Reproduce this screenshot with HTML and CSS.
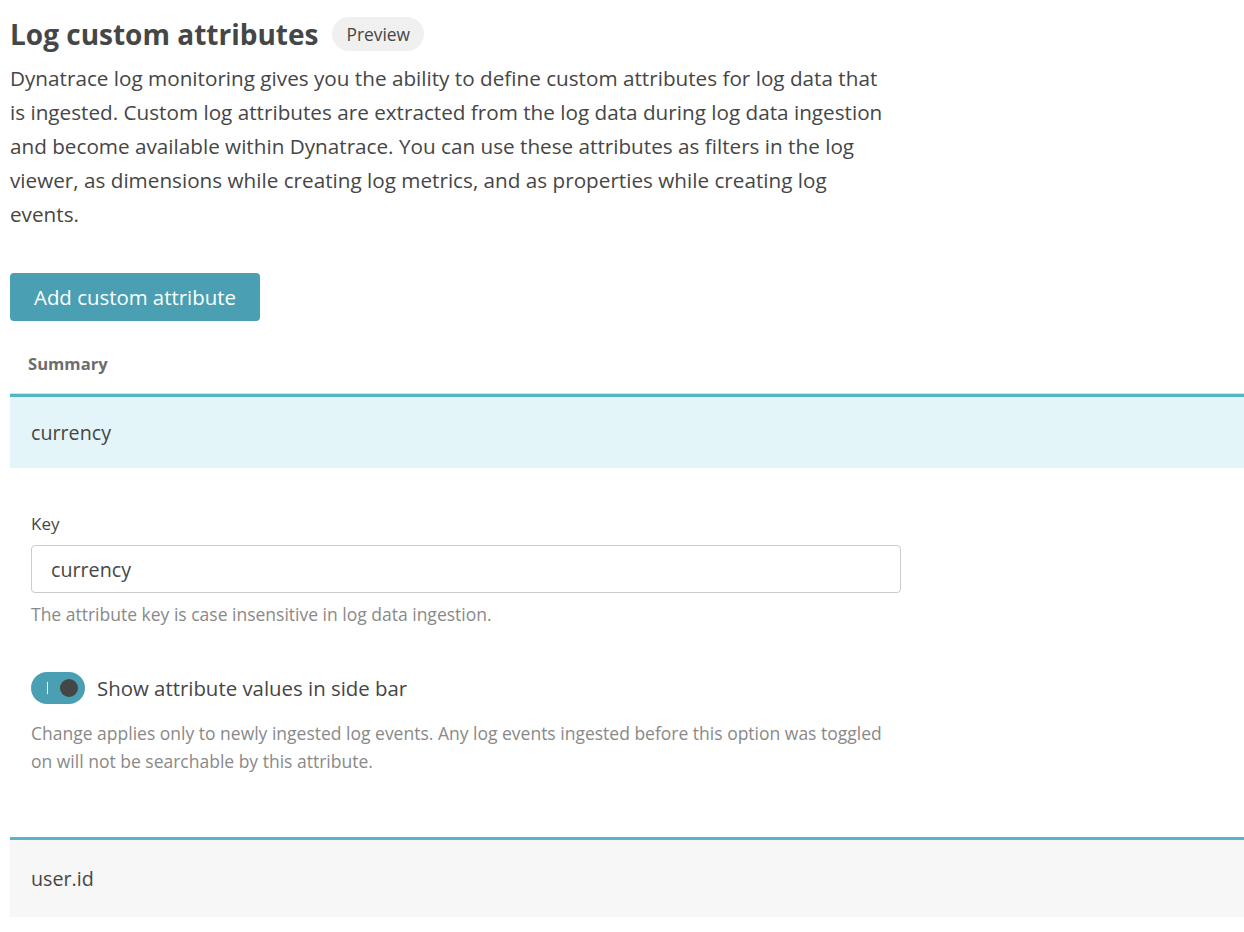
FILE: index.html
```html
<!DOCTYPE html>
<html lang="en">
<head>
<meta charset="utf-8">
<title>Log custom attributes</title>
<link rel="stylesheet" href="styles.css">
</head>
<body>
<div class="page">
  <header class="head">
    <h1 class="title">Log custom attributes</h1>
    <span class="badge">Preview</span>
  </header>
  <p class="desc">Dynatrace log monitoring gives you the ability to define custom attributes for log data that<br>is ingested. Custom log attributes are extracted from the log data during log data ingestion<br>and become available within Dynatrace. You can use these attributes as filters in the log<br>viewer, as dimensions while creating log metrics, and as properties while creating log<br>events.</p>
  <button class="btn" type="button">Add custom attribute</button>
  <div class="table">
    <div class="thead">Summary</div>
    <div class="row row-open">currency</div>
    <div class="details">
      <label class="label" for="key">Key</label>
      <input class="input" id="key" type="text" value="currency">
      <p class="hint">The attribute key is case insensitive in log data ingestion.</p>
      <div class="toggle-line">
        <span class="toggle"><span class="toggle-bar"></span><span class="toggle-knob"></span></span>
        <span class="toggle-label">Show attribute values in side bar</span>
      </div>
      <p class="hint hint-wide">Change applies only to newly ingested log events. Any log events ingested before this option was toggled on will not be searchable by this attribute.</p>
    </div>
    <div class="row row-closed">user.id</div>
  </div>
</div>
</body>
</html>
```
FILE: styles.css
```css
html, body {
  margin: 0;
  padding: 0;
  background: #ffffff;
}
body {
  font-family: "Open Sans", "Noto Sans", sans-serif;
  color: #454646;
}
.page {
  padding: 14px 0 0 10px;
}
.head {
  display: flex;
  align-items: center;
  gap: 14px;
}
.title {
  margin: 0;
  font-size: 28px;
  font-weight: 700;
  line-height: 40px;
  color: #454646;
}
.badge {
  display: inline-block;
  background: #f0f0f0;
  border-radius: 17px;
  padding: 0 14px;
  height: 34px;
  line-height: 34px;
  font-size: 17.4px;
  color: #454646;
}
.desc {
  margin: 7px 0 0 0;
  max-width: 910px;
  font-size: 20.7px;
  line-height: 34px;
  color: #454646;
}
.btn {
  display: block;
  margin-top: 42px;
  height: 48px;
  width: 250px;
  border: none;
  border-radius: 4px;
  background: #4aa0b2;
  color: #ffffff;
  font-family: inherit;
  font-size: 20.4px;
  padding: 0 24px;
  text-align: left;
}
.thead {
  margin-top: 13px;
  height: 60px;
  box-sizing: border-box;
  padding: 0 18px;
  display: flex;
  align-items: center;
  font-size: 16.6px;
  font-weight: 700;
  color: #6d6d6d;
  border-bottom: 1px solid #dcdcdc;
}
.row {
  height: 74px;
  box-sizing: border-box;
  padding: 0 21px;
  display: flex;
  align-items: center;
  font-size: 19.7px;
  color: #454646;
  border-top: 3px solid #55b6c8;
}
.row-open {
  background: #e3f5f9;
}
.row-closed {
  background: #f7f7f7;
  height: 80px;
}
.details {
  padding: 44px 21px 62px 21px;
}
.label {
  display: block;
  font-size: 17px;
  line-height: 24px;
  color: #454646;
}
.input {
  display: block;
  margin-top: 9px;
  width: 870px;
  height: 48px;
  box-sizing: border-box;
  border: 1px solid #cccccc;
  border-radius: 4px;
  padding: 0 19px;
  font-family: inherit;
  font-size: 19.7px;
  color: #454646;
  background: #ffffff;
}
.hint {
  margin: 7px 0 0 0;
  font-size: 17.5px;
  line-height: 28px;
  color: #898989;
}
.hint-wide {
  max-width: 860px;
  margin-top: 15px;
}
.toggle-line {
  display: flex;
  align-items: center;
  gap: 12px;
  margin-top: 44px;
}
.toggle {
  position: relative;
  display: inline-block;
  width: 54px;
  height: 32px;
  border-radius: 16px;
  background: #4aa0b2;
}
.toggle-bar {
  position: absolute;
  left: 16px;
  top: 10px;
  width: 1px;
  height: 12px;
  background: #ffffff;
}
.toggle-knob {
  position: absolute;
  left: 29px;
  top: 7px;
  width: 18px;
  height: 18px;
  border-radius: 50%;
  background: #454646;
}
.toggle-label {
  font-size: 20.4px;
  color: #454646;
}
```
